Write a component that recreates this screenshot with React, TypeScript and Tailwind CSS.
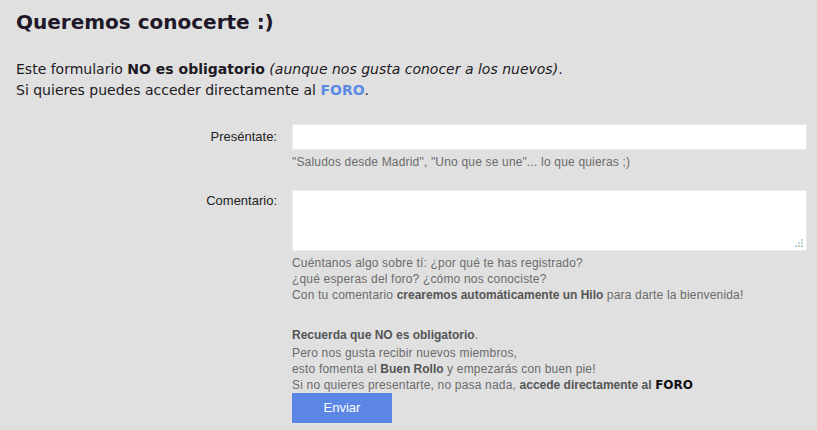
import React from "react";

function Grip() {
  const c1 = "#b9d3d6";
  const c2 = "#d8d0a8";
  return (
    <svg width="9" height="9" viewBox="0 0 9 9" className="absolute right-[3px] bottom-[2px] pointer-events-none">
      <rect x="7" y="0" width="2" height="2" fill={c1} />
      <rect x="4" y="3" width="2" height="2" fill={c1} />
      <rect x="7" y="3" width="2" height="2" fill={c1} />
      <rect x="1" y="6" width="2" height="2" fill={c1} />
      <rect x="4" y="6" width="2" height="2" fill={c2} />
      <rect x="7" y="6" width="2" height="2" fill={c1} />
    </svg>
  );
}

export default function App() {
  const verdana = { fontFamily: '"DejaVu Sans", Verdana, sans-serif' };
  const arial = { fontFamily: '"Liberation Sans", Arial, sans-serif' };
  return (
    <div className="w-[817px] h-[430px] bg-[#e0e0e0] overflow-hidden pl-4">
      <h1 className="pt-[10px] text-[20px] leading-[24px] font-bold text-[#1e1828]" style={verdana}>
        Queremos conocerte :)
      </h1>
      <div className="mt-[25px] text-[14px] leading-[21px] text-[#1e1a24]" style={verdana}>
        <p>
          Este formulario <b>NO es obligatorio</b> <i>(aunque nos gusta conocer a los nuevos)</i>.
        </p>
        <p>
          Si quieres puedes acceder directamente al{" "}
          <a className="font-bold text-[#5a8ae6]">FORO</a>.
        </p>
      </div>

      <div className="mt-[23px] flex" style={arial}>
        <div className="w-[261px] shrink-0 text-right text-[13px] text-[#222] leading-[26px]">Preséntate:</div>
        <div className="ml-[15px] w-[515px]">
          <div className="h-[26px] bg-white border border-[#ebebeb]" />
          <div className="mt-[4px] text-[12px] leading-[16px] tracking-[0.18px] text-[#6b6b6b]">
            "Saludos desde Madrid", "Uno que se une"... lo que quieras ;)
          </div>
        </div>
      </div>

      <div className="mt-[20px] flex" style={arial}>
        <div className="w-[261px] shrink-0 text-right text-[13px] text-[#222] leading-[16px] pt-[3px]">Comentario:</div>
        <div className="ml-[15px] w-[515px]">
          <div className="relative h-[61px] bg-white border border-[#ebebeb]">
            <Grip />
          </div>
          <div className="mt-[4px] text-[12px] leading-[16px] tracking-[0.18px] text-[#6b6b6b]">
            <p>Cuéntanos algo sobre tí: ¿por qué te has registrado?</p>
            <p>¿qué esperas del foro? ¿cómo nos conociste?</p>
            <p>
              Con tu comentario <b className="text-[#555] tracking-normal">crearemos automáticamente un Hilo</b> para darte la bienvenida!
            </p>
          </div>
          <div className="mt-[24px] text-[12px] leading-[16px] tracking-[0.18px] text-[#6b6b6b]">
            <p className="mb-[2px]">
              <b className="text-[#555] tracking-normal">Recuerda que NO es obligatorio</b>.
            </p>
            <p>Pero nos gusta recibir nuevos miembros,</p>
            <p>
              esto fomenta el <b className="text-[#555] tracking-normal">Buen Rollo</b> y empezarás con buen pie!
            </p>
            <p>
              Si no quieres presentarte, no pasa nada, <b className="text-[#555] tracking-normal">accede directamente al</b>{" "}
              <b className="text-[#111] tracking-normal" style={{ fontFamily: '"DejaVu Sans", Tahoma, sans-serif', fontSize: "12px" }}>FORO</b>
            </p>
          </div>
          <button className="mt-[0px] w-[100px] h-[30px] bg-[#5b86e5] text-white text-[13px]" style={arial}>
            Enviar
          </button>
        </div>
      </div>
    </div>
  );
}
